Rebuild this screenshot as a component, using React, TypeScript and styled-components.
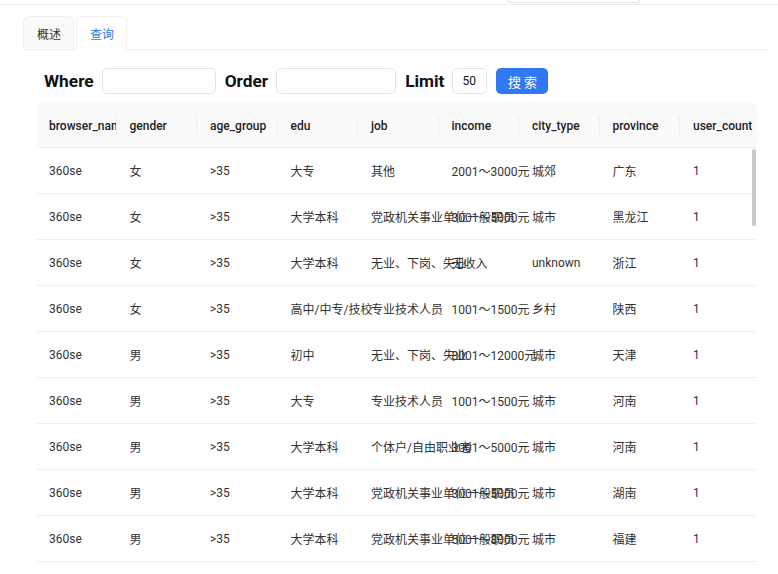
import React from "react";
import styled, { createGlobalStyle } from "styled-components";

const GlobalStyle = createGlobalStyle`
  html, body {
    margin: 0;
    padding: 0;
    background: #ffffff;
    overflow: hidden;
  }
  body {
    font-family: "Segoe UI", Roboto, "Noto Sans CJK SC", sans-serif;
    color: #333333;
  }
  * { box-sizing: border-box; }
`;

const Page = styled.div`
  width: 778px;
  height: 574px;
  overflow: hidden;
  display: flex;
  flex-direction: column;
`;

const TopStrip = styled.div`
  height: 5px;
  flex: none;
  border-bottom: 1px solid #eeeeee;
  padding-left: 507px;
  display: flex;
  align-items: flex-start;
`;

const TopBox = styled.div`
  width: 133px;
  height: 3px;
  border: 1px solid #e6e6e6;
  border-top: none;
  border-radius: 0 0 4px 4px;
  background: #ffffff;
`;

const Tabs = styled.div`
  margin: 12px 8px 0 23px;
  display: flex;
  flex-direction: column;
  flex: 1;
  min-height: 0;
`;

const TabBar = styled.div`
  display: flex;
  align-items: flex-end;
  gap: 2px;
  height: 33px;
  border-bottom: 1px solid #f0f0f0;
  flex: none;
`;

const Tab = styled.div<{ $active?: boolean }>`
  height: 34px;
  margin-bottom: -1px;
  padding: 1px 12px 0 13px;
  display: flex;
  align-items: center;
  font-family: "Noto Sans CJK SC", sans-serif;
  font-size: 12px;
  color: ${(p) => (p.$active ? "#2f78f2" : "#333333")};
  background: ${(p) => (p.$active ? "#ffffff" : "#fafafa")};
  border: 1px solid #f0f0f0;
  border-bottom-color: ${(p) => (p.$active ? "#ffffff" : "#f0f0f0")};
  border-radius: 6px 6px 0 0;
`;

const Pane = styled.div`
  padding: 0 13px;
  display: flex;
  flex-direction: column;
  flex: 1;
  min-height: 0;
`;

const FormRow = styled.div`
  margin-top: 18px;
  padding-left: 8px;
  height: 26px;
  display: flex;
  align-items: center;
  flex: none;
`;

const Label = styled.span`
  font-size: 17.3px;
  font-weight: 700;
  color: #111111;
  margin-right: 8px;
`;

const Input = styled.div<{ $w: number }>`
  width: ${(p) => p.$w}px;
  height: 26px;
  border: 1px solid #e4e4e4;
  border-radius: 5px;
  background: #ffffff;
  margin-right: 9px;
  display: flex;
  align-items: center;
  padding-left: 9px;
  font-size: 12px;
  color: #111111;
`;

const Button = styled.button`
  width: 52px;
  height: 26px;
  border: none;
  border-radius: 5px;
  background: #3179f2;
  color: #ffffff;
  font-family: "Noto Sans CJK SC", sans-serif;
  font-size: 13px;
  letter-spacing: 3px;
  padding: 0 0 0 3px;
`;

const Table = styled.div`
  margin-top: 8px;
  width: 721px;
  display: flex;
  flex-direction: column;
  flex: 1;
  min-height: 0;
  overflow: hidden;
`;

const HeadRow = styled.div`
  display: grid;
  grid-template-columns: repeat(9, 80.5px);
  height: 46px;
  padding-top: 2px;
  background: #fafafa;
  border-bottom: 1px solid #f0f0f0;
  border-radius: 6px 6px 0 0;
  flex: none;
`;

const HeadCell = styled.div<{ $sep: boolean }>`
  position: relative;
  padding: 0 13px;
  display: flex;
  align-items: center;
  font-size: 12px;
  font-weight: 500;
  color: #222222;
  white-space: nowrap;
  overflow: hidden;
  &::after {
    content: "";
    display: ${(p) => (p.$sep ? "block" : "none")};
    position: absolute;
    right: 0;
    top: 50%;
    width: 1px;
    height: 19px;
    transform: translateY(-50%);
    background: #eeeeee;
  }
`;

const Body = styled.div`
  position: relative;
  flex: 1;
  min-height: 0;
  overflow: hidden;
`;

const Row = styled.div`
  display: grid;
  grid-template-columns: repeat(9, 80.5px);
  height: 46px;
  border-bottom: 1px solid #f0f0f0;
`;

const Cell = styled.div`
  padding: 0 13px;
  display: flex;
  align-items: center;
  font-size: 12px;
  color: #333333;
  white-space: nowrap;
  min-width: 0;
`;

const ScrollThumb = styled.div`
  position: absolute;
  right: 1px;
  top: 1px;
  width: 4px;
  height: 77px;
  border-radius: 3px;
  background: #c8c8c8;
`;

const columns = [
  "browser_name",
  "gender",
  "age_group",
  "edu",
  "job",
  "income",
  "city_type",
  "province",
  "user_count",
];

const rows: string[][] = [
  ["360se", "女", ">35", "大专", "其他", "2001～3000元", "城郊", "广东", "1"],
  ["360se", "女", ">35", "大学本科", "党政机关事业单位一般职员", "3001～5000元", "城市", "黑龙江", "1"],
  ["360se", "女", ">35", "大学本科", "无业、下岗、失业", "无收入", "unknown", "浙江", "1"],
  ["360se", "女", ">35", "高中/中专/技校", "专业技术人员", "1001～1500元", "乡村", "陕西", "1"],
  ["360se", "男", ">35", "初中", "无业、下岗、失业", "8001～12000元", "城市", "天津", "1"],
  ["360se", "男", ">35", "大专", "专业技术人员", "1001～1500元", "城市", "河南", "1"],
  ["360se", "男", ">35", "大学本科", "个体户/自由职业者", "3001～5000元", "城市", "河南", "1"],
  ["360se", "男", ">35", "大学本科", "党政机关事业单位一般职员", "3001～5000元", "城市", "湖南", "1"],
  ["360se", "男", ">35", "大学本科", "党政机关事业单位一般职员", "5001～8000元", "城市", "福建", "1"],
];

export default function App() {
  return (
    <Page>
      <GlobalStyle />
      <TopStrip>
        <TopBox />
      </TopStrip>
      <Tabs>
        <TabBar>
          <Tab>概述</Tab>
          <Tab $active>查询</Tab>
        </TabBar>
        <Pane>
          <FormRow>
            <Label>Where</Label>
            <Input $w={114} />
            <Label>Order</Label>
            <Input $w={120} />
            <Label>Limit</Label>
            <Input $w={35}>50</Input>
            <Button>搜索</Button>
          </FormRow>
          <Table>
            <HeadRow>
              {columns.map((c, i) => (
                <HeadCell key={c} $sep={i < columns.length - 1}>
                  {c}
                </HeadCell>
              ))}
            </HeadRow>
            <Body>
              {rows.map((r, i) => (
                <Row key={i}>
                  {r.map((v, j) => (
                    <Cell key={j}>{v}</Cell>
                  ))}
                </Row>
              ))}
              <ScrollThumb />
            </Body>
          </Table>
        </Pane>
      </Tabs>
    </Page>
  );
}
